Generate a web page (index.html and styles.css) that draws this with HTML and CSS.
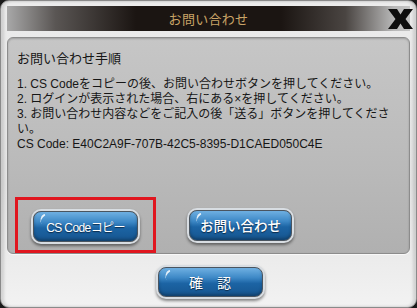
FILE: index.html
```html
<!DOCTYPE html>
<html lang="ja">
<head>
    <meta charset="UTF-8">
    <meta name="viewport" content="width=device-width, initial-scale=1.0">
    <title>お問い合わせ</title>
    <link rel="stylesheet" href="styles.css">
</head>
<body>
    <div class="dialog">
        <div class="dialog-header">
            <h1>お問い合わせ</h1>
            <button class="close-btn" aria-label="閉じる">
                <svg width="27" height="22" viewBox="0 0 27 22">
                    <path d="M1 1 H10 L13.5 6.5 L17 1 H26 L18.5 11 L26 21 H17 L13.5 15.5 L10 21 H1 L8.5 11 Z" fill="#0e0e0e"/>
                </svg>
            </button>
        </div>
        <div class="panel">
            <div class="steps">
                <p class="steps-title">お問い合わせ手順</p>
                <p>1. CS Codeをコピーの後、お問い合わせボタンを押してください。<br>
                2. ログインが表示された場合、右にある×を押してください。<br>
                3. お問い合わせ内容などをご記入の後「送る」ボタンを押してください。<br>
                CS Code: E40C2A9F-707B-42C5-8395-D1CAED050C4E</p>
            </div>
            <div class="panel-actions">
                <div class="highlight">
                    <button class="blue-btn btn-copy">CS Codeコピー</button>
                </div>
                <button class="blue-btn btn-contact">お問い合わせ</button>
            </div>
        </div>
        <div class="dialog-footer">
            <button class="blue-btn btn-ok">確　認</button>
        </div>
    </div>
</body>
</html>
```

FILE: styles.css
```css
* {
    margin: 0;
    padding: 0;
    box-sizing: border-box;
    font-family: 'Liberation Sans', 'Noto Sans CJK JP', sans-serif;
}

body {
    background-color: #1a1a1a;
    width: 417px;
    height: 308px;
    overflow: hidden;
}

.dialog {
    width: 417px;
    height: 308px;
    border-radius: 9px;
    border: 1px solid #8a8a8a;
    background: linear-gradient(180deg, #ececec 0%, #e2e2e2 60%, #f2f2f2 100%);
    box-shadow: inset 3px 0 3px rgba(0, 0, 0, 0.12), inset -3px 0 3px rgba(0, 0, 0, 0.12);
    padding: 5px 6px 0 6px;
    display: flex;
    flex-direction: column;
}

.dialog-header {
    position: relative;
    height: 25px;
    background: linear-gradient(90deg, #a8a8a8 0%, #5a5654 12%, #1b1512 32%, #1b1512 68%, #4a4542 84%, #b8b8b8 96%, #c4c4c4 100%);
    display: flex;
    align-items: center;
    justify-content: center;
}

.dialog-header h1 {
    font-size: 13px;
    font-weight: normal;
    color: #c9a467;
    letter-spacing: 0.3px;
}

.close-btn {
    position: absolute;
    right: -4px;
    top: 2px;
    background: none;
    border: none;
    cursor: pointer;
}

.panel {
    margin-top: 6px;
    height: 217px;
    border: 1px solid #8c8c8c;
    border-radius: 6px;
    background: linear-gradient(180deg, #c6c6c6 0%, #bcbcbc 50%, #b0b0b0 100%);
    box-shadow: inset 0 1px 2px rgba(0, 0, 0, 0.2), 0 1px 1px rgba(255, 255, 255, 0.7);
    padding: 13px 8px 0 9px;
    display: flex;
    flex-direction: column;
}

.steps {
    color: #161616;
    font-size: 12px;
    line-height: 15px;
}

.steps-title {
    font-size: 13px;
    margin-bottom: 11px;
}

.panel-actions {
    margin-top: auto;
    display: flex;
    align-items: center;
    gap: 33px;
    margin-left: -2px;
}

.highlight {
    border: 3px solid #e0161f;
    padding: 11px 15px 8px 15px;
}

.blue-btn {
    position: relative;
    height: 31px;
    border-radius: 8px;
    border: 1px solid #4a5560;
    background: linear-gradient(180deg, #6fb0e2 0%, #3d88c6 35%, #1c64a4 55%, #16558f 100%);
    box-shadow: 0 0 0 2px #d8dde2, 0 2px 3px 2px rgba(0, 0, 0, 0.45), inset 0 -2px 3px rgba(0, 0, 0, 0.25);
    color: #fff;
    text-shadow: 0 1px 1px #0b2a48;
    cursor: pointer;
}

.blue-btn::before {
    content: '';
    position: absolute;
    left: 5px;
    top: 3px;
    width: 8px;
    height: 6px;
    border-top: 2px solid rgba(255, 255, 255, 0.85);
    border-radius: 8px 0 0 0;
    transform: rotate(-30deg);
}

.btn-copy {
    width: 105px;
    font-size: 12px;
    letter-spacing: -0.6px;
}

.btn-contact {
    width: 103px;
    font-size: 13.5px;
    font-weight: 500;
}

.dialog-footer {
    display: flex;
    justify-content: center;
    padding-top: 13px;
}

.btn-ok {
    width: 105px;
    height: 30px;
    font-size: 14px;
    margin-left: 3px;
}
```
